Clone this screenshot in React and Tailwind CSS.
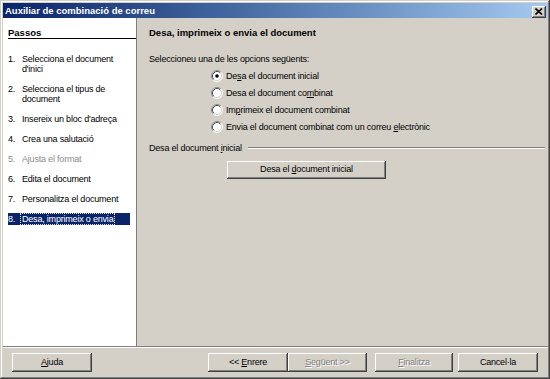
import React from 'react';

const steps = [
  { n: '1.', lines: ['Selecciona el document', "d'inici"] },
  { n: '2.', lines: ['Selecciona el tipus de', 'document'] },
  { n: '3.', lines: ["Insereix un bloc d'adreça"] },
  { n: '4.', lines: ['Crea una salutació'] },
  { n: '5.', lines: ['Ajusta el format'], disabled: true },
  { n: '6.', lines: ['Edita el document'] },
  { n: '7.', lines: ['Personalitza el document'] },
  { n: '8.', lines: ['Desa, imprimeix o envia'], active: true },
];

// text with one underlined access key: [before, key, after]
function Key({ parts }) {
  return (
    <span className="whitespace-pre">
      {parts[0]}
      <span className="underline underline-offset-[1px]">{parts[1]}</span>
      {parts[2]}
    </span>
  );
}

function Radio({ checked }) {
  return (
    <svg width="12" height="12" viewBox="0 0 12 12" className="shrink-0">
      <circle cx="6" cy="6" r="5" fill="#fff" />
      <path d="M2.11 9.89 A5.5 5.5 0 0 1 9.89 2.11" fill="none" stroke="#8a8a8a" />
      <path d="M9.89 2.11 A5.5 5.5 0 0 1 2.11 9.89" fill="none" stroke="#ffffff" />
      <path d="M2.82 9.18 A4.5 4.5 0 0 1 9.18 2.82" fill="none" stroke="#505050" />
      <path d="M9.18 2.82 A4.5 4.5 0 0 1 2.82 9.18" fill="none" stroke="#d4d0c8" />
      {checked && <circle cx="6" cy="6" r="1.8" fill="#000" />}
    </svg>
  );
}

function Button({ width, disabled, children, className = '' }) {
  return (
    <div
      className={`flex items-center justify-center bg-[#d4d0c8] shadow-[inset_-1px_-1px_#404040,inset_1px_1px_#fff,inset_-2px_-2px_#808080,inset_2px_2px_#d4d0c8] ${
        disabled ? 'text-[#808080] [text-shadow:1px_1px_0_#fff]' : 'text-black'
      } ${width} ${className}`}
    >
      {children}
    </div>
  );
}

export default function App() {
  const options = [
    { parts: ['De', 's', 'a el document inicial'], checked: true },
    { parts: ['Desa el document co', 'm', 'binat'] },
    { parts: ['Im', 'p', 'rimeix el document combinat'] },
    { parts: ['Envia el document combinat com un correu ', 'e', 'lectrònic'] },
  ];

  return (
    <div className="w-[550px] h-[379px] flex flex-col bg-[#d4d0c8] pt-[3px] pl-[3px] pr-[2px] pb-[2px] shadow-[inset_-1px_-1px_#404040,inset_1px_1px_#d4d0c8,inset_-2px_-2px_#808080,inset_2px_2px_#fff] font-['Liberation_Sans',Arial,sans-serif] text-[9px] tracking-[-0.2px] text-black">
      {/* Title bar */}
      <div className="h-[15px] flex items-center justify-between bg-gradient-to-r from-[#0a246a] to-[#a6caf0]">
        <span className="pl-[2px] text-white font-bold text-[9.5px] tracking-normal leading-[15px]">
          Auxiliar de combinació de correu
        </span>
        <div className="mr-[2px] mt-[2px] w-[14px] h-[12px] flex items-center justify-center bg-[#d4d0c8] shadow-[inset_-1px_-1px_#404040,inset_1px_1px_#fff,inset_-2px_-2px_#808080,inset_2px_2px_#d4d0c8]">
          <svg width="8" height="7" viewBox="0 0 8 7">
            <path d="M0.5 0.5 L7 6.5 M7 0.5 L0.5 6.5" stroke="#000" strokeWidth="1.6" />
          </svg>
        </div>
      </div>

      {/* Main */}
      <div className="h-[328px] flex">
        <div className="w-[134px] bg-white border-r border-[#808080] pl-[5px] pt-[9px]">
          <div className="font-bold text-[9.5px] tracking-normal leading-[11px] border-b border-black">
            Passos
          </div>
          <div className="mt-[14px] mr-[6px] flex flex-col gap-[8px]">
            {steps.map((s) => (
              <div
                key={s.n}
                className={`flex py-[1px] leading-[10px] ${
                  s.active ? 'bg-[#0a246a] text-white' : s.disabled ? 'text-[#8c8c8c]' : ''
                }`}
              >
                <span className="w-[14px] shrink-0">{s.n}</span>
                <span
                  className={
                    s.active ? 'outline outline-1 outline-dotted outline-[#e8e4b0] -ml-[1px] pl-[1px] pr-[1px]' : ''
                  }
                >
                  {s.lines.map((l, i) => (
                    <div key={i}>{l}</div>
                  ))}
                </span>
              </div>
            ))}
          </div>
        </div>

        <div className="flex-1 flex flex-col pl-[12px] pr-[3px] pt-[9px]">
          <div className="font-bold text-[9.5px] tracking-normal leading-[12px]">
            Desa, imprimeix o envia el document
          </div>
          <div className="mt-[14px] leading-[12px]">Seleccioneu una de les opcions següents:</div>
          <div className="mt-[2px] ml-[62px] flex flex-col">
            {options.map((o, i) => (
              <div key={i} className="h-[17px] flex items-center gap-[3px]">
                <Radio checked={o.checked} />
                <span className="leading-[12px]">
                  <Key parts={o.parts} />
                </span>
              </div>
            ))}
          </div>
          <div className="mt-[7px] flex items-center gap-[6px] leading-[12px]">
            <Key parts={['Desa el document ', 'i', 'nicial']} />
            <div className="flex-1 border-t border-[#808080] border-b border-b-white" />
          </div>
          <Button width="w-[159px]" className="mt-[7px] ml-[78px] h-[18px]">
            <Key parts={['Desa el ', 'd', 'ocument inicial']} />
          </Button>
        </div>
      </div>

      {/* Separator */}
      <div className="h-[2px] border-t border-[#808080] border-b border-b-white" />

      {/* Buttons */}
      <div className="h-[29px] flex items-start pt-[5px]">
        <Button width="w-[80px]" className="ml-[9px] h-[19px]">
          <Key parts={['', 'A', 'juda']} />
        </Button>
        <div className="flex-1" />
        <div className="flex mr-[10px]">
          <Button width="w-[80px]" className="h-[19px]">
            <Key parts={['<< ', 'E', 'nrere']} />
          </Button>
          <Button width="w-[79px]" className="h-[19px]" disabled>
            <Key parts={['', 'S', 'egüent >>']} />
          </Button>
          <Button width="w-[78px]" className="ml-[8px] h-[19px]" disabled>
            <Key parts={['', 'F', 'inalitza']} />
          </Button>
          <Button width="w-[80px]" className="ml-[5px] h-[19px]">
            Cancel·la
          </Button>
        </div>
      </div>
    </div>
  );
}
